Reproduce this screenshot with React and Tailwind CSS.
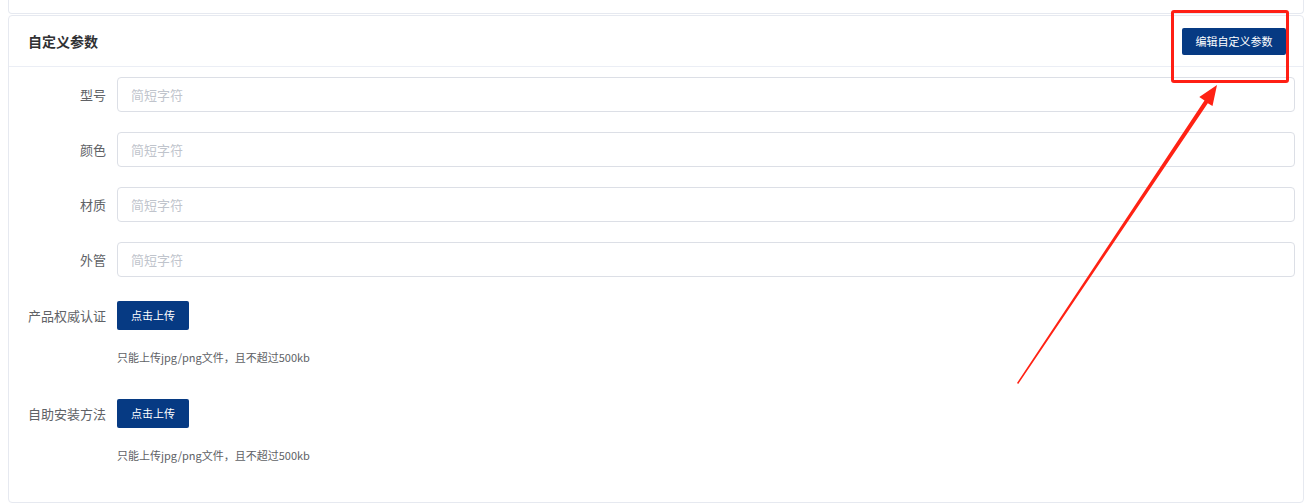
import React from "react";

const font = { fontFamily: '"Noto Sans CJK SC", "Noto Sans", sans-serif' };

function InputRow({ label }) {
  return (
    <div className="flex items-center">
      <div className="w-[108px] shrink-0 pr-[11px] text-right text-[13px] text-[#606266]">{label}</div>
      <input
        className="h-[35px] flex-1 rounded-[4px] border border-[#dcdfe6] bg-white px-[13px] text-[13px] text-[#606266] outline-none placeholder:text-[#c0c4cc]"
        placeholder="简短字符"
        style={font}
      />
    </div>
  );
}

function UploadRow({ label }) {
  return (
    <div>
      <div className="flex items-center">
        <div className="w-[108px] shrink-0 pr-[11px] text-right text-[13px] text-[#606266]">{label}</div>
        <button className="h-[29px] w-[72px] rounded-[2px] bg-[#063a83] text-[11px] text-white" style={font}>
          点击上传
        </button>
      </div>
      <div className="ml-[108px] mt-[18px] h-[18px] text-[11px] leading-[18px] text-[#606266]">
        只能上传jpg/png文件，且不超过500kb
      </div>
    </div>
  );
}

export default function App() {
  return (
    <div className="relative h-[504px] w-full overflow-hidden bg-white pl-[8px] pr-[7px]" style={font}>
      <div className="h-[14px] rounded-b-[4px] border-x border-b border-[#e6e9f0]" />
      <div className="mt-[1px] h-[488px] rounded-[4px] border border-[#e6e9f0]">
        <div className="flex h-[51px] items-center justify-between border-b border-[#ebeef5] pl-[19px] pr-[17px]">
          <div className="text-[14px] font-bold text-[#303133]">自定义参数</div>
          <button className="h-[27px] w-[104px] rounded-[2px] bg-[#063a83] text-[11px] text-white" style={font}>
            编辑自定义参数
          </button>
        </div>
        <div className="flex flex-col pr-[8px] pt-[10px]">
          <div className="flex flex-col gap-[20px]">
            <InputRow label="型号" />
            <InputRow label="颜色" />
            <InputRow label="材质" />
            <InputRow label="外管" />
          </div>
          <div className="mt-[24px]">
            <UploadRow label="产品权威认证" />
          </div>
          <div className="mt-[33px]">
            <UploadRow label="自助安装方法" />
          </div>
        </div>
      </div>

      {/* annotation overlay */}
      <div className="pointer-events-none absolute left-[1171px] top-[10px] h-[73px] w-[118px] rounded-[3px] border-[3px] border-[#ff1f14]" />
      <svg className="pointer-events-none absolute left-0 top-0" width="1311" height="504">
        <polygon
          points="1017,383 1204.5,100.6 1199.3,97.1 1217,85 1212.5,106.1 1207.8,103.2 1018.2,384"
          fill="#ff2214"
        />
      </svg>
    </div>
  );
}
